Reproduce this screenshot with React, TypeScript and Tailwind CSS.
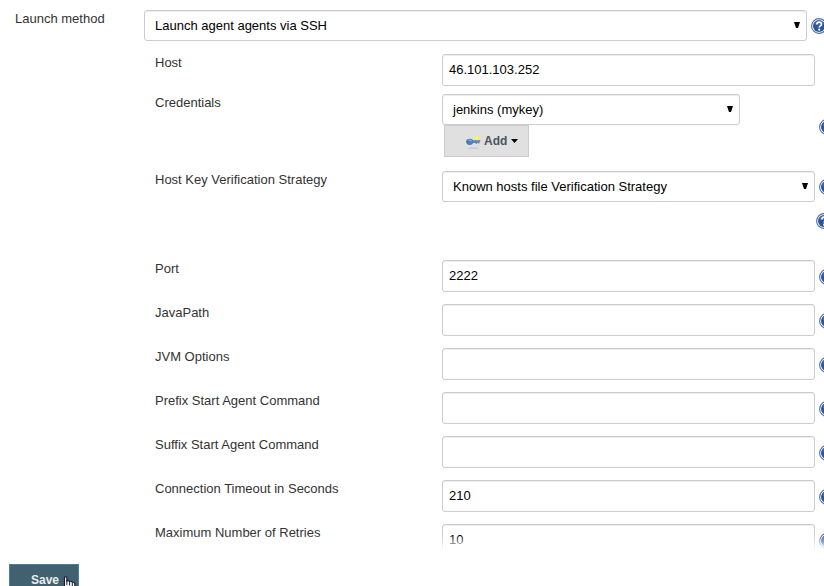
import type { ReactNode } from "react";

function HelpIcon() {
  return (
    <svg className="block h-4 w-4 shrink-0" viewBox="0 0 16 16" role="img" aria-label="Help">
      <circle cx="8" cy="8" r="7.4" fill="#fff" stroke="#4a70a6" strokeWidth="1.1" />
      <circle cx="8" cy="8" r="6" fill="#2d5696" />
      <path d="M3 6a5.4 5.4 0 0 1 10 0Q8 8 3 6Z" fill="#6488bb" opacity=".4" />
      <path d="M5.7 6.6C5.7 5 6.7 4.1 8.1 4.1s2.4.8 2.4 2.1c0 1.6-2.3 1.7-2.3 3.4" fill="none" stroke="#fff" strokeWidth="1.7" />
      <circle cx="8.2" cy="11.7" r="1.1" fill="#fff" />
    </svg>
  );
}

function TextBox({ value }: { value: string }) {
  return (
    <div className="h-8 w-[373px] shrink-0 rounded-[3px] border border-[#ccc] bg-white px-1.5 pt-[7px] leading-4 text-black shadow-[inset_0_1px_1px_rgba(0,0,0,0.075)]">
      {value}
    </div>
  );
}

function SelectBox({ value, width }: { value: string; width: string }) {
  return (
    <div className={`${width} flex h-[31px] shrink-0 justify-between rounded-[3px] border border-[#ccc] bg-white pl-2.5 pr-1.5 pt-[7px] leading-4 text-black shadow-[inset_0_1px_1px_rgba(0,0,0,0.075)]`}>
      <span>{value}</span>
      <svg className="mt-1 h-[6px] w-[6px]" viewBox="0 0 6 6">
        <path d="M0 0h6L4 6H2Z" fill="#000" />
      </svg>
    </div>
  );
}

function Row({ label, height, help, children }: { label: string; height: string; help?: boolean; children: ReactNode }) {
  return (
    <div className={`flex shrink-0 items-start ${height}`}>
      <div className="w-[287px] shrink-0 pt-px leading-4">{label}</div>
      {children}
      {help && <div className="ml-1 mt-[9px]"><HelpIcon /></div>}
    </div>
  );
}

function AddButton() {
  return (
    <div className="ml-0.5 flex h-8 w-[85px] items-center border border-[#ccc] bg-[#e0e0e0] pl-5 text-[12px] font-bold text-[#4d545d]">
      <svg className="h-4 w-4" viewBox="0 0 16 16">
        <ellipse cx="8" cy="15.2" rx="5.5" ry=".6" fill="#c2c2c2" />
        <path d="M6 7.2h9.2v1.9h-.8v1.4h-1.3V9.8h-1v1H10.6V9.9H6Z" fill="#5b83b8" />
        <ellipse cx="4.7" cy="8.8" rx="3.7" ry="3.1" fill="#5280bb" />
        <path d="M2 7.6Q4.5 5.5 7.2 7.5L6 8.4Q4 7.5 2 7.6Z" fill="#83a6d1" />
        <circle cx="2.9" cy="8.7" r=".8" fill="#315f9b" />
        <rect x="10" y="3" width="4.5" height="4" rx=".8" fill="#f8ed50" />
        <circle cx="12.2" cy="5" r="1" fill="#fffac0" />
      </svg>
      <span className="ml-[3px] leading-4">Add</span>
      <svg className="ml-1 h-1 w-[7px]" viewBox="0 0 7 4"><path d="M0 0h7L3.5 4Z" fill="#000" /></svg>
    </div>
  );
}

const rows = [
  ["Port", "2222"],
  ["JavaPath", ""],
  ["JVM Options", ""],
  ["Prefix Start Agent Command", ""],
  ["Suffix Start Agent Command", ""],
  ["Connection Timeout in Seconds", "210"],
  ["Maximum Number of Retries", "10"],
];

export default function App() {
  return (
    <div className="relative h-[586px] w-[824px] overflow-hidden bg-white font-['Liberation_Sans',Arial,sans-serif] text-[13px] text-[#333]">
      <div className="flex h-[550px] flex-col overflow-hidden pt-2.5">
        <div className="flex h-11 shrink-0 items-start pl-[15px]">
          <div className="w-[129px] shrink-0 pt-px leading-4">Launch method</div>
          <SelectBox value="Launch agent agents via SSH" width="w-[663px]" />
          <div className="ml-1 mt-2"><HelpIcon /></div>
        </div>
        <div className="flex flex-col pl-[155px]">
          <Row label="Host" height="h-10"><TextBox value="46.101.103.252" /></Row>
          <Row label="Credentials" height="h-[77px]">
            <div className="w-[373px] shrink-0">
              <SelectBox value="jenkins (mykey)" width="w-[298px]" />
              <AddButton />
            </div>
            <div className="ml-1 mt-[25px]"><HelpIcon /></div>
          </Row>
          <Row label="Host Key Verification Strategy" height="h-[42px]">
            <SelectBox value="Known hosts file Verification Strategy" width="w-[373px]" />
            <div className="ml-1 mt-2"><HelpIcon /></div>
          </Row>
          <div className="h-[47px] pl-[661px]"><HelpIcon /></div>
          {rows.map(([label, value]) => (
            <Row key={label} label={label} height="h-11" help><TextBox value={value} /></Row>
          ))}
        </div>
      </div>
      <div className="absolute inset-x-0 top-[535px] h-[15px] bg-linear-to-b from-white/0 to-white" />
      <div className="ml-[9px] mt-3.5 h-8 w-[70px] border border-[#4b8099] bg-[#416070] pl-[21px] pt-[7px] text-[12px] leading-4 font-bold text-[#eee]">Save</div>
      <svg className="absolute left-[63px] top-[576px] h-[20px] w-[14px]" viewBox="0 0 14 20">
        <path d="M1.5 1.5Q2.5 0 3.8 1.5V5Q5.2 4 6.5 5.5Q8.2 4.8 9.2 6.3Q11 6 11.8 7.5V16H3L1.5 13Z" fill="#fff" stroke="#17172b" strokeWidth="1.1" />
        <path d="M3.9 4.5V9M6.6 6v3.5M9.3 6.8V10" stroke="#17172b" />
      </svg>
    </div>
  );
}
